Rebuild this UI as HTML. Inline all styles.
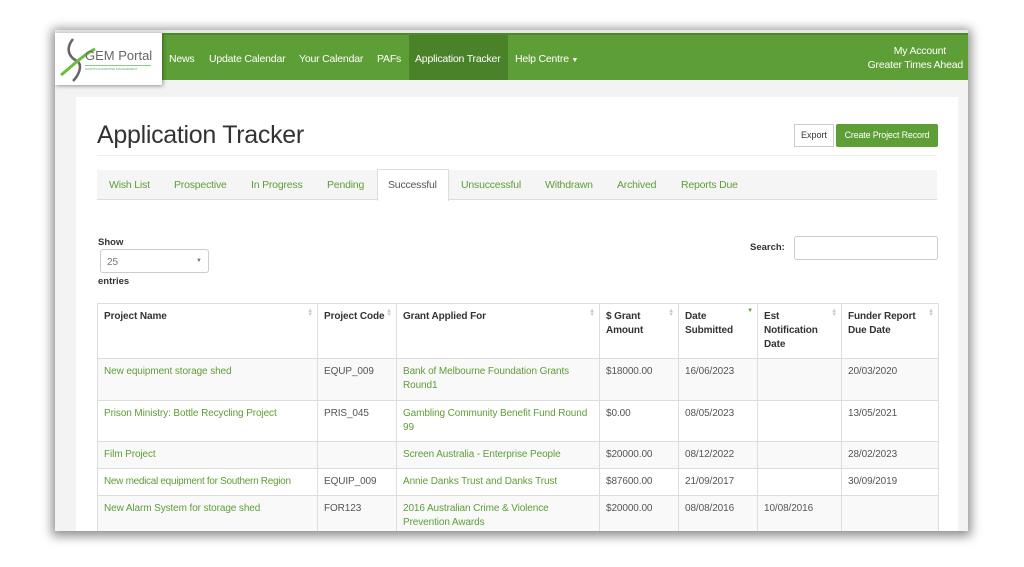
<!DOCTYPE html>
<html><head><meta charset="utf-8"><style>
*{box-sizing:border-box;margin:0;padding:0}
body{width:1024px;height:567px;background:#fff;font-family:"Liberation Sans",Arial,sans-serif;position:relative;overflow:hidden}
#frame{position:absolute;left:55px;top:30px;width:913px;height:501px;background:#f3f3f3;overflow:hidden;box-shadow:0 2px 10px 3px rgba(0,0,0,.45)}
#nav{position:absolute;left:0;top:3px;width:913px;height:47px;background:#5d9e36;border-top:2px solid #4a8a28}
.ni{position:absolute;top:18px;color:#fff;font-size:10.5px;white-space:nowrap;letter-spacing:-0.2px}
#act{position:absolute;left:354px;top:0;width:99px;height:45px;background:#4a8229}
#logo{position:absolute;left:0;top:3px;width:107px;height:52px;background:#fff;box-shadow:1px 1px 4px rgba(0,0,0,.4)}
#panel{position:absolute;left:21px;top:67px;width:882px;height:440px;background:#fff}
.a{position:absolute;white-space:nowrap}
h1{position:absolute;left:42px;top:91px;font-size:25px;font-weight:normal;color:#333;font-family:"Liberation Sans",sans-serif;letter-spacing:-0.3px}
.tab{position:absolute;top:149px;font-size:10.5px;color:#5d9e36;letter-spacing:-0.2px}
table{position:absolute;left:42px;top:273px;border-collapse:collapse;font-size:10px;color:#555;table-layout:fixed;width:841px}
td,th{border:1px solid #ddd;vertical-align:top;padding:6px 6px;line-height:14px;text-align:left;letter-spacing:-0.1px}
th{color:#333;font-weight:bold;height:55px;position:relative;padding-top:6px}
th .s{position:absolute;right:4px;top:5px;color:#ccc;font-size:6px;line-height:4px}
tr.g td{background:#f9f9f9}
td.l{color:#5d9e36}
</style></head><body>
<div id="frame">
 <div style="position:absolute;left:0;top:0;width:913px;height:3px;background:#e6e6e6"></div>
 <div id="nav">
  <div id="act"></div>
  <div class="ni" style="left:114px">News</div>
  <div class="ni" style="left:154px">Update Calendar</div>
  <div class="ni" style="left:244px">Your Calendar</div>
  <div class="ni" style="left:322px">PAFs</div>
  <div class="ni" style="left:360px">Application Tracker</div>
  <div class="ni" style="left:460px">Help Centre <span style="font-size:7px">▼</span></div>
  <div class="ni" style="right:22px;top:10px">My Account</div>
  <div class="ni" style="right:5px;top:24px">Greater Times Ahead</div>
 </div>
 <div id="logo">
  <svg width="107" height="52" style="position:absolute;left:0;top:0">
   <path d="M18 6 C10 16,14 24,22 28 C28 32,24 42,18 48" stroke="#666" stroke-width="2.5" fill="none"/>
   <path d="M6 42 C16 34,28 22,40 16" stroke="#6cbd3c" stroke-width="3" fill="none"/>
  </svg>
  <div class="a" style="left:30px;top:15px;font-size:13px;color:#666">GEM Portal</div>
  <div style="position:absolute;left:30px;top:32px;width:66px;height:1px;background:#8c8"></div>
  <div class="a" style="left:30px;top:34px;font-size:3px;color:#6a6">GRANTS EXPERTISE MANAGEMENT</div>
 </div>
 <div id="panel"></div>
 <h1>Application Tracker</h1>
 <div style="position:absolute;left:42px;top:125px;width:840px;height:1px;background:#eee"></div>
 <div style="position:absolute;left:739px;top:94px;width:40px;height:23px;border:1px solid #ccc;background:#fff;font-size:9px;color:#333;text-align:center;line-height:21px">Export</div>
 <div style="position:absolute;left:781px;top:94px;width:102px;height:23px;background:#5d9e36;border-radius:2px;font-size:9px;color:#fff;text-align:center;line-height:23px;letter-spacing:-0.2px">Create Project Record</div>
 <div style="position:absolute;left:42px;top:140px;width:840px;height:30px;background:#f5f5f5;border-bottom:1px solid #ddd"></div>
 <div style="position:absolute;left:322px;top:139px;width:72px;height:32px;background:#fff;border:1px solid #ddd;border-bottom:none"></div>
 <div class="tab" style="left:54px">Wish List</div>
 <div class="tab" style="left:119px">Prospective</div>
 <div class="tab" style="left:196px">In Progress</div>
 <div class="tab" style="left:272px">Pending</div>
 <div class="tab" style="left:333px;color:#555">Successful</div>
 <div class="tab" style="left:406px">Unsuccessful</div>
 <div class="tab" style="left:490px">Withdrawn</div>
 <div class="tab" style="left:562px">Archived</div>
 <div class="tab" style="left:626px">Reports Due</div>
 <div class="a" style="left:43px;top:207px;font-size:9.5px;font-weight:bold;color:#333">Show</div>
 <div style="position:absolute;left:45px;top:219px;width:109px;height:24px;border:1px solid #ccc;border-radius:3px;background:#fff;font-size:10px;color:#777;padding:7px 0 0 6px">25<span style="position:absolute;right:6px;top:8px;font-size:6px">▼</span></div>
 <div class="a" style="left:43px;top:246px;font-size:9.5px;font-weight:bold;color:#333">entries</div>
 <div class="a" style="left:695px;top:212px;font-size:9.5px;font-weight:bold;color:#333">Search:</div>
 <div style="position:absolute;left:739px;top:206px;width:144px;height:24px;border:1px solid #ccc;border-radius:3px;background:#fff"></div>
 <table>
  <colgroup><col style="width:220px"><col style="width:79px"><col style="width:203px"><col style="width:79px"><col style="width:79px"><col style="width:84px"><col style="width:97px"></colgroup>
  <tr><th>Project Name<span class="s">▲<br>▼</span></th><th>Project Code<span class="s">▲<br>▼</span></th><th>Grant Applied For<span class="s">▲<br>▼</span></th><th>$ Grant Amount<span class="s">▲<br>▼</span></th><th>Date Submitted<span class="s" style="color:#5d9e36">▼</span></th><th>Est Notification Date<span class="s">▲<br>▼</span></th><th>Funder Report Due Date<span class="s">▲<br>▼</span></th></tr>
  <tr class="g" style="height:42px"><td class="l">New equipment storage shed</td><td>EQUP_009</td><td class="l">Bank of Melbourne Foundation Grants Round1</td><td>$18000.00</td><td>16/06/2023</td><td></td><td>20/03/2020</td></tr>
  <tr style="height:41px"><td class="l">Prison Ministry: Bottle Recycling Project</td><td>PRIS_045</td><td class="l">Gambling Community Benefit Fund Round 99</td><td>$0.00</td><td>08/05/2023</td><td></td><td>13/05/2021</td></tr>
  <tr class="g" style="height:27px"><td class="l">Film Project</td><td></td><td class="l">Screen Australia - Enterprise People</td><td>$20000.00</td><td>08/12/2022</td><td></td><td>28/02/2023</td></tr>
  <tr style="height:26px"><td class="l" style="white-space:nowrap;letter-spacing:-0.3px">New medical equipment for Southern Region</td><td>EQUIP_009</td><td class="l">Annie Danks Trust and Danks Trust</td><td>$87600.00</td><td>21/09/2017</td><td></td><td>30/09/2019</td></tr>
  <tr class="g" style="height:42px"><td class="l">New Alarm System for storage shed</td><td>FOR123</td><td class="l">2016 Australian Crime &amp; Violence Prevention Awards</td><td>$20000.00</td><td>08/08/2016</td><td>10/08/2016</td><td></td></tr>
 </table>
</div>
</body></html>
